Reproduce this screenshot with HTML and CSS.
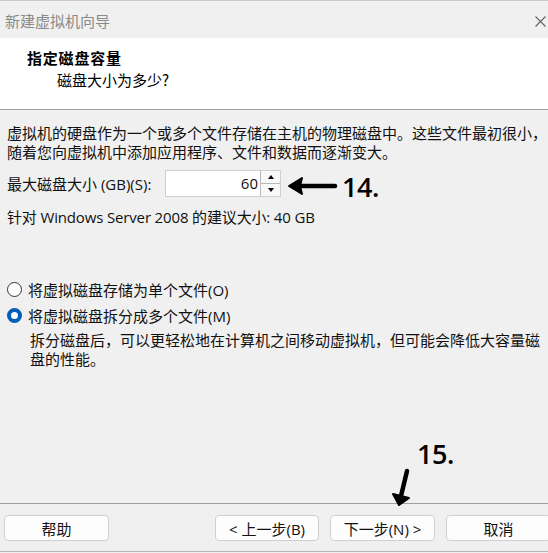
FILE: index.html
```html
<!DOCTYPE html>
<html lang="zh-CN">
<head>
    <meta charset="UTF-8">
    <meta name="viewport" content="width=device-width, initial-scale=1.0">
    <title>新建虚拟机向导</title>
    <link rel="stylesheet" href="styles.css">
</head>
<body>
    <div class="window">
        <div class="titlebar">
            <span class="title">新建虚拟机向导</span>
            <svg class="close" width="11" height="11" viewBox="0 0 11 11">
                <path d="M0.5 0.5 L10.5 10.5 M10.5 0.5 L0.5 10.5" stroke="#666" stroke-width="1.2" fill="none"/>
            </svg>
        </div>

        <div class="header">
            <div class="header-title">指定磁盘容量</div>
            <div class="header-sub">磁盘大小为多少?</div>
        </div>

        <div class="content">
            <p class="intro">虚拟机的硬盘作为一个或多个文件存储在主机的物理磁盘中。这些文件最初很小，随着您向虚拟机中添加应用程序、文件和数据而逐渐变大。</p>

            <div class="size-row">
                <label class="size-label">最大磁盘大小 (GB)(S):</label>
                <div class="spinner">
                    <div class="spin-value">60</div>
                    <div class="spin-buttons">
                        <div class="spin-btn"><span class="tri-up"></span></div>
                        <div class="spin-btn"><span class="tri-down"></span></div>
                    </div>
                </div>
                <svg class="arrow-left" width="52" height="22" viewBox="0 0 52 22">
                    <path d="M12 11 L48 11" stroke="#000" stroke-width="4.5" stroke-linecap="round"/>
                    <path d="M2 11 L15 3 L13 11 L15 19 Z" fill="#000" stroke="#000" stroke-width="2" stroke-linejoin="round"/>
                </svg>
                <span class="step-mark">14.</span>
            </div>

            <div class="hint">针对 Windows Server 2008 的建议大小: 40 GB</div>

            <div class="options">
                <div class="radio-row">
                    <span class="radio"></span>
                    <span>将虚拟磁盘存储为单个文件(O)</span>
                </div>
                <div class="radio-row">
                    <span class="radio checked"></span>
                    <span>将虚拟磁盘拆分成多个文件(M)</span>
                </div>
                <p class="option-note">拆分磁盘后，可以更轻松地在计算机之间移动虚拟机，但可能会降低大容量磁盘的性能。</p>
            </div>
        </div>

        <!-- annotation over the footer -->
        <div class="mark-15">
            <span class="step-mark">15.</span>
            <svg width="24" height="40" viewBox="0 0 24 40">
                <path d="M17 3 L11 28" stroke="#000" stroke-width="4.5" stroke-linecap="round"/>
                <path d="M3 26 L9 37 L19 30 L11 28 Z" fill="#000" stroke="#000" stroke-width="2" stroke-linejoin="round"/>
            </svg>
        </div>

        <div class="footer">
            <button class="btn">帮助</button>
            <button class="btn btn-prev">&lt; 上一步(B)</button>
            <button class="btn">下一步(N) &gt;</button>
            <button class="btn">取消</button>
        </div>
    </div>
</body>
</html>
```

FILE: styles.css
```css
html, body {
    overflow: hidden;
}
body {
    margin: 0;
    background-color: #f0f0f0;
    font-family: "Open Sans", "Noto Sans CJK SC", sans-serif;
    font-size: 15px;
    color: #111;
}
.window {
    position: relative;
    width: 100%;
    height: 552px;
    display: flex;
    flex-direction: column;
    border-top: 1px solid #c9c9c9;
    border-bottom: 1px solid #b4b4b4;
    box-sizing: border-box;
    overflow: hidden;
}
.titlebar {
    height: 37px;
    flex: none;
    display: flex;
    align-items: center;
    justify-content: space-between;
    padding: 0 0 0 5px;
    background-color: #f0f0f0;
}
.title {
    font-family: "Noto Sans CJK SC", sans-serif;
    color: #8a8a8a;
    font-size: 15px;
    margin-top: 2px;
}
.close {
    flex: none;
    margin: 3px 2px 0 0;
}
.header {
    height: 72px;
    flex: none;
    background-color: #fff;
    border-bottom: 1px solid #a0a0a0;
    padding-top: 10px;
    box-sizing: border-box;
}
.header-title {
    font-family: "Noto Sans CJK SC", sans-serif;
    font-weight: bold;
    line-height: 20px;
    padding-left: 27px;
    letter-spacing: 0.8px;
    color: #000;
}
.header-sub {
    font-family: "Noto Sans CJK SC", sans-serif;
    line-height: 20px;
    margin-top: 2px;
    padding-left: 57px;
    color: #000;
}
.content {
    flex: 1;
    padding: 14px 0 0 7px;
}
.intro {
    margin: 0;
    line-height: 19px;
}
.size-row {
    display: flex;
    align-items: center;
    margin-top: 8px;
    height: 27px;
}
.size-label {
    width: 158px;
}
.spinner {
    display: flex;
    height: 27px;
    border: 1px solid #cfcfcf;
    box-sizing: border-box;
    background-color: #fff;
}
.spin-value {
    width: 92px;
    text-align: right;
    padding-right: 2px;
    line-height: 25px;
}
.spin-buttons {
    width: 19px;
    display: flex;
    flex-direction: column;
    border-left: 1px solid #b8b8b8;
    background-color: #f8f8f8;
}
.spin-btn {
    flex: 1;
    display: flex;
    align-items: center;
    justify-content: center;
}
.spin-btn + .spin-btn {
    border-top: 1px solid #b8b8b8;
}
.tri-up {
    border-left: 3px solid transparent;
    border-right: 3px solid transparent;
    border-bottom: 4px solid #000;
}
.tri-down {
    border-left: 3px solid transparent;
    border-right: 3px solid transparent;
    border-top: 4px solid #000;
}
.arrow-left {
    margin-left: 6px;
    margin-top: 4px;
}
.step-mark {
    font-family: "Open Sans", sans-serif;
    font-weight: 600;
    font-size: 27px;
    color: #000;
    letter-spacing: -0.5px;
    margin-left: 3px;
    margin-top: 5px;
}
.hint {
    margin-top: 11px;
    line-height: 19px;
    letter-spacing: -0.15px;
}
.options {
    margin-top: 49px;
}
.radio-row {
    display: flex;
    align-items: center;
    height: 26px;
}
.radio {
    width: 13px;
    height: 13px;
    border: 1px solid #333;
    border-radius: 50%;
    background-color: #fff;
    margin-right: 6px;
    flex: none;
}
.radio.checked {
    width: 7px;
    height: 7px;
    border: 4px solid #005fb8;
    background-color: #fff;
}
.option-note {
    margin: 3px 0 0 23px;
    line-height: 19px;
}
.mark-15 {
    position: absolute;
    left: 390px;
    top: 438px;
    display: flex;
    flex-direction: column;
    align-items: flex-start;
}
.mark-15 .step-mark {
    margin: 0 0 0 27px;
    line-height: 30px;
}
.mark-15 svg {
    margin-top: -1px;
}
.footer {
    flex: none;
    height: 48px;
    display: flex;
    align-items: flex-start;
    gap: 11px;
    padding: 11px 0 0 4px;
    border-top: 1px solid #a0a0a0;
    box-sizing: border-box;
}
.btn {
    width: 105px;
    height: 26px;
    flex: none;
    background-color: #fdfdfd;
    border: 1px solid #d0d0d0;
    border-radius: 4px;
    font-family: "Open Sans", "Noto Sans CJK SC", sans-serif;
    font-size: 15px;
    color: #111;
    padding: 0;
}
.btn-prev {
    margin-left: 95px;
    width: 104px;
}
```
